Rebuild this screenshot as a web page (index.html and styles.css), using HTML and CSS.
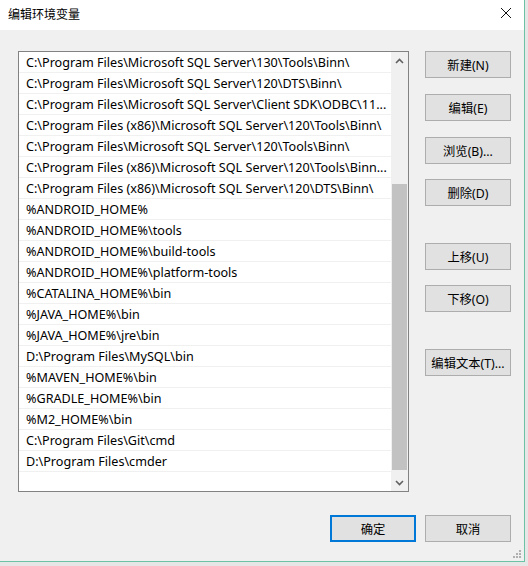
FILE: index.html
```html
<!DOCTYPE html>
<html>
<head>
<meta charset="utf-8">
<link rel="stylesheet" href="styles.css">
</head>
<body>
<div class="screen">
  <div class="window">
    <div class="titlebar">
      <span class="title">编辑环境变量</span>
      <svg class="close" width="12" height="12" viewBox="0 0 12 12"><path d="M1 1 L11 11 M11 1 L1 11" stroke="#111" stroke-width="1" fill="none"/></svg>
    </div>
    <div class="body">
      <div class="main">
        <div class="listbox">
          <div class="items">
            <div class="row">C:\Program Files\Microsoft SQL Server\130\Tools\Binn\</div>
            <div class="row">C:\Program Files\Microsoft SQL Server\120\DTS\Binn\</div>
            <div class="row">C:\Program Files\Microsoft SQL Server\Client SDK\ODBC\11...</div>
            <div class="row">C:\Program Files (x86)\Microsoft SQL Server\120\Tools\Binn\</div>
            <div class="row">C:\Program Files\Microsoft SQL Server\120\Tools\Binn\</div>
            <div class="row">C:\Program Files (x86)\Microsoft SQL Server\120\Tools\Binn...</div>
            <div class="row">C:\Program Files (x86)\Microsoft SQL Server\120\DTS\Binn\</div>
            <div class="row">%ANDROID_HOME%</div>
            <div class="row">%ANDROID_HOME%\tools</div>
            <div class="row">%ANDROID_HOME%\build-tools</div>
            <div class="row">%ANDROID_HOME%\platform-tools</div>
            <div class="row">%CATALINA_HOME%\bin</div>
            <div class="row">%JAVA_HOME%\bin</div>
            <div class="row">%JAVA_HOME%\jre\bin</div>
            <div class="row">D:\Program Files\MySQL\bin</div>
            <div class="row">%MAVEN_HOME%\bin</div>
            <div class="row">%GRADLE_HOME%\bin</div>
            <div class="row">%M2_HOME%\bin</div>
            <div class="row">C:\Program Files\Git\cmd</div>
            <div class="row">D:\Program Files\cmder</div>
          </div>
          <div class="scrollbar">
            <div class="arrow">
              <svg width="9" height="6" viewBox="0 0 9 6"><path d="M1 5 L4.5 1.5 L8 5" stroke="#606060" stroke-width="1.6" fill="none"/></svg>
            </div>
            <div class="track">
              <div class="thumb"></div>
            </div>
            <div class="arrow">
              <svg width="9" height="6" viewBox="0 0 9 6"><path d="M1 1 L4.5 4.5 L8 1" stroke="#606060" stroke-width="1.6" fill="none"/></svg>
            </div>
          </div>
        </div>
        <div class="buttons">
          <div class="btn b-new">新建(N)</div>
          <div class="btn b-edit">编辑(E)</div>
          <div class="btn b-browse">浏览(B)...</div>
          <div class="btn b-del">删除(D)</div>
          <div class="btn b-up">上移(U)</div>
          <div class="btn b-down">下移(O)</div>
          <div class="btn b-text">编辑文本(T)...</div>
        </div>
      </div>
      <div class="footer">
        <div class="btn primary">确定</div>
        <div class="btn">取消</div>
      </div>
      <div class="grip">
        <svg width="8" height="8" viewBox="0 0 8 8" fill="#b0b0b0"><rect x="6" y="0" width="2" height="2"/><rect x="3" y="3" width="2" height="2"/><rect x="6" y="3" width="2" height="2"/><rect x="0" y="6" width="2" height="2"/><rect x="3" y="6" width="2" height="2"/><rect x="6" y="6" width="2" height="2"/></svg>
      </div>
    </div>
  </div>
</div>
</body>
</html>
```

FILE: styles.css
```css
html, body {
  margin: 0;
  padding: 0;
}
body {
  width: 528px;
  height: 566px;
  overflow: hidden;
  background: #e6e6e6;
  font-family: "Noto Sans", "Noto Sans CJK SC", sans-serif;
  font-size: 12px;
  color: #000;
}
.screen {
  width: 528px;
  height: 566px;
}
.window {
  width: 524px;
  height: 561px;
  border-right: 1px solid #6cc3a3;
  border-bottom: 1px solid #6cc3a3;
  background: #f0f0f0;
  display: flex;
  flex-direction: column;
  position: relative;
}
.titlebar {
  height: 30px;
  background: #ffffff;
  display: flex;
  align-items: center;
  justify-content: space-between;
  padding: 0 12px 4px 8px;
  box-sizing: border-box;
}
.title {
  font-family: "Noto Sans CJK SC", sans-serif;
  font-size: 12px;
}
.body {
  flex: 1;
  padding: 21px 0 0 18px;
  position: relative;
}
.main {
  display: flex;
  align-items: flex-start;
}
.listbox {
  width: 389px;
  height: 439px;
  border: 1px solid #828282;
  background: #fff;
  display: flex;
}
.items {
  flex: 1;
  min-width: 0;
}
.row {
  height: 20px;
  line-height: 22px;
  border-bottom: 1px solid #f0f0f0;
  padding-left: 7px;
  font-size: 12.6px;
  white-space: nowrap;
  overflow: hidden;
}
.scrollbar {
  width: 17px;
  background: #f0f0f0;
  display: flex;
  flex-direction: column;
}
.arrow {
  height: 17px;
  display: flex;
  align-items: center;
  justify-content: center;
}
.track {
  flex: 1;
  padding: 115px 1px 0 1px;
}
.thumb {
  height: 286px;
  background: #c2c2c2;
}
.buttons {
  margin-left: 16px;
  display: flex;
  flex-direction: column;
}
.btn {
  width: 84px;
  height: 25px;
  border: 1px solid #adadad;
  background: #e1e1e1;
  display: flex;
  align-items: center;
  justify-content: center;
  font-family: "Noto Sans", "Noto Sans CJK SC", sans-serif;
  font-size: 12.3px;
  white-space: nowrap;
}
.b-edit, .b-browse { margin-top: 16px; }
.b-del { margin-top: 15px; }
.b-up { margin-top: 37px; }
.b-down { margin-top: 15px; }
.b-text { margin-top: 37px; }
.footer {
  display: flex;
  justify-content: flex-end;
  gap: 9px;
  padding: 23px 13px 0 0;
}
.btn.primary {
  border: 2px solid #0078d7;
  width: 82px;
  height: 23px;
}
.grip {
  position: absolute;
  right: 3px;
  bottom: 3px;
  width: 8px;
  height: 8px;
  line-height: 0;
}
```
